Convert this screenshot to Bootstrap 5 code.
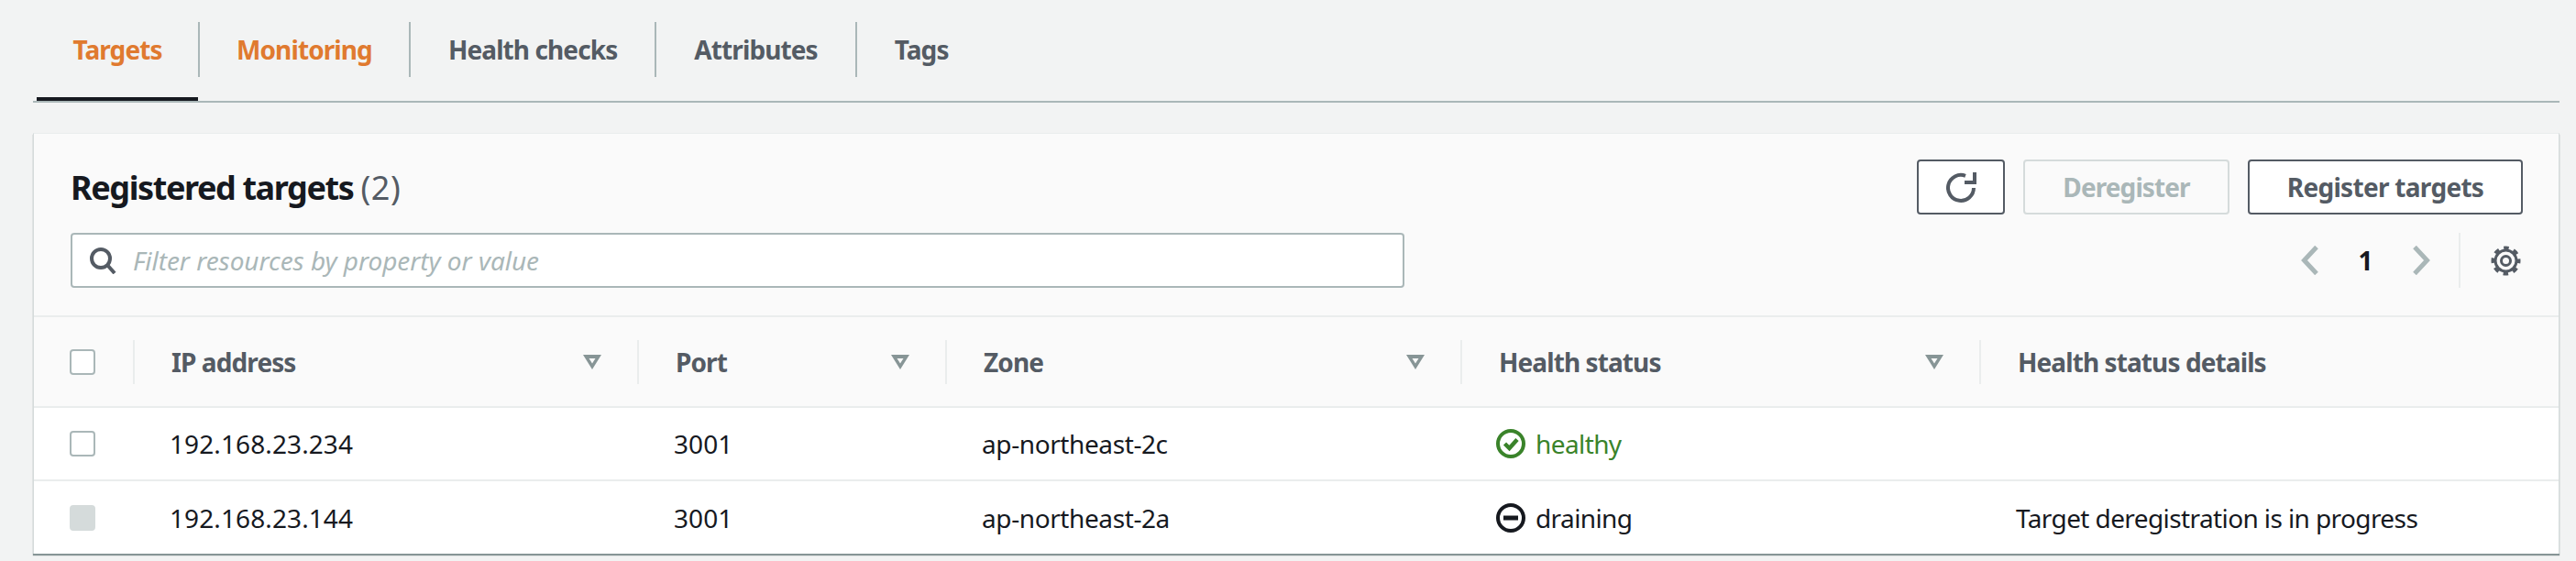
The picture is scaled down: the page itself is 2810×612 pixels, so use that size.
<!DOCTYPE html>
<html lang="en">
<head>
<meta charset="utf-8">
<title>Registered targets</title>
<link href="https://cdn.jsdelivr.net/npm/bootstrap@5.3.0/dist/css/bootstrap.min.css" rel="stylesheet">
<style>
:root { --ink:#16191f; --slate:#545b64; --rule:#eaeded; --steel:#aab7b8; --pale:#d5dbdb; }
html, body { height:100%; }
body { background:#f2f3f3; color:var(--ink); font-family:"Noto Sans","Open Sans",sans-serif; font-size:28px; line-height:40px; overflow:hidden; }
.tabstrip { margin:0 18px 0 36px; height:112px; border-bottom:2px solid var(--steel); padding:24px 0 0 4px; }
.tabitem { height:60px; padding:0 41px; font-size:28px; font-weight:700; line-height:60px; color:var(--slate); border-left:2px solid var(--steel); letter-spacing:-.9px; position:relative; }
.tabitem:first-child { border-left:0; padding:0; width:176px; text-align:center; }
.tabitem.tab-hot { padding:0 40px; }
.tabitem.tab-on, .tabitem.tab-hot { color:#e07a2f; }
.tabitem.tab-on::after { content:""; position:absolute; left:0; right:0; top:82px; height:4px; background:var(--ink); }
.panel { margin:33px 18px 0 36px; height:459px; background:#fff; border-top:1px solid var(--rule); border-left:1px solid #d5dbdb; border-right:1px solid #d5dbdb; box-shadow:0 2px 1px #879596; }
.panelhead { height:200px; background:#fafafa; border-bottom:2px solid var(--rule); padding:28px 39px 0 40px; }
.paneltitle { font-size:36px; line-height:52px; font-weight:700; letter-spacing:-1.4px; margin:5px 0 0; }
.paneltitle span { font-weight:400; color:var(--slate); letter-spacing:.6px; }
.awsbtn { height:60px; border:2px solid var(--slate); border-radius:4px; background:#fff; color:var(--slate); font-size:28px; font-weight:700; line-height:1; padding:0; letter-spacing:-.9px; }
.awsbtn:disabled { border-color:var(--pale); color:var(--steel); opacity:1; background:#fafafa; }
.btn-refresh { width:96px; }
.btn-dereg { width:225px; }
.btn-reg { width:300px; letter-spacing:-.7px; }
.filterbox { width:1455px; height:60px; margin-top:23px; border:2px solid var(--steel); border-radius:4px; background:#fff; padding-left:19px; }
.filterbox input { border:0; outline:0; background:transparent; flex:1; font-size:28px; font-style:italic; color:var(--ink); letter-spacing:-.05px; margin-left:18px; padding:0; }
.filterbox input::placeholder { color:var(--steel); opacity:1; }
.pager { margin-top:20px; height:60px; padding-right:2px; }
.pagenum { width:101px; text-align:center; font-weight:700; font-size:28px; }
.pagerule { width:2px; height:60px; background:var(--rule); margin:0 33px 0 31px; }
.targets { table-layout:fixed; width:100%; margin:0; border-collapse:collapse; }
.table.targets > thead > tr > th { height:98px; padding:0; background:#fafafa; color:var(--slate); font-weight:700; font-size:28px; letter-spacing:-.9px; vertical-align:middle; border-bottom:2px solid var(--rule); box-shadow:none; }
.table.targets > tbody > tr > td { height:80px; padding:0 0 0 40px; color:var(--ink); font-size:28px; letter-spacing:-.4px; vertical-align:middle; background:#fff; border-bottom:2px solid var(--rule); box-shadow:none; }
.table.targets > tbody > tr:last-child > td { border-bottom:0; }
.table.targets > tbody > tr > td.cell-tick { padding-left:39px; }
.table.targets > tbody > tr > td.ip-val { letter-spacing:.1px; }
.table.targets > tbody > tr > td.cell-tight { letter-spacing:-.6px; }
.table.targets > tbody > tr > td.cell-good { color:#3a832a; }
.headcell { height:48px; padding:0 39px 0 40px; border-left:2px solid var(--rule); }
.headcell.no-rule { border-left:0; padding:0 0 0 39px; }
.tickbox { display:block; width:28px; height:28px; border:2px solid var(--steel); border-radius:4px; background:#fff; }
.tickbox.tick-off { background:var(--pale); border-color:var(--pale); }
.statusline { gap:11px; margin-left:-1px; }
</style>
</head>
<body>
<nav class="tabstrip d-flex">
  <div class="tabitem tab-on">Targets</div>
  <div class="tabitem tab-hot">Monitoring</div>
  <div class="tabitem">Health checks</div>
  <div class="tabitem">Attributes</div>
  <div class="tabitem">Tags</div>
</nav>
<section class="panel">
  <div class="panelhead d-flex justify-content-between">
    <div>
      <h2 class="paneltitle">Registered targets <span>(2)</span></h2>
      <div class="filterbox d-flex align-items-center">
        <svg width="29" height="29" viewBox="0 0 29 29" fill="none" stroke="#545b64" stroke-width="4"><circle cx="12" cy="12" r="10"/><path d="M19 19l8 9"/></svg>
        <input type="text" placeholder="Filter resources by property or value" aria-label="Filter">
      </div>
    </div>
    <div class="d-flex flex-column align-items-end">
      <div class="d-flex" style="gap:20px">
        <button class="awsbtn btn-refresh" aria-label="Refresh"><svg width="33" height="33" viewBox="0 0 33 33" fill="none"><path d="M21 3.800A14 14 0 1 0 30 17" stroke="#545b64" stroke-width="4"/><path d="M33 0v13H20V9h9V0z" fill="#545b64"/></svg></button>
        <button class="awsbtn btn-dereg" disabled>Deregister</button>
        <button class="awsbtn btn-reg">Register targets</button>
      </div>
      <div class="pager d-flex align-items-center">
        <svg width="20" height="32" viewBox="0 0 20 32" fill="none" stroke="#aab7b8" stroke-width="5"><path d="M17 1.500L3.500 16 17 30.500"/></svg>
        <span class="pagenum">1</span>
        <svg width="20" height="32" viewBox="0 0 20 32" fill="none" stroke="#aab7b8" stroke-width="5"><path d="M3 1.500L16.500 16 3 30.500"/></svg>
        <span class="pagerule"></span>
        <svg width="33" height="33" viewBox="0 0 33 33" fill="none" stroke="#545b64"><circle cx="16.500" cy="16.500" r="11.500" stroke-width="3"/><circle cx="16.500" cy="16.500" r="14" stroke-width="4" stroke-dasharray="5.500 5.500" stroke-dashoffset="2.750"/><circle cx="16.500" cy="16.500" r="5" stroke-width="3"/></svg>
      </div>
    </div>
  </div>
  <table class="table targets">
    <colgroup><col style="width:108px"><col style="width:550px"><col style="width:336px"><col style="width:562px"><col style="width:566px"><col></colgroup>
    <thead>
      <tr>
        <th><div class="headcell no-rule d-flex align-items-center"><span class="tickbox"></span></div></th>
        <th><div class="headcell d-flex align-items-center justify-content-between">IP address<svg width="20" height="16" viewBox="0 0 20 16"><path fill="#879596" fill-rule="evenodd" d="M0 0h20L10 16zM6.500 4h7L10 9.500z"/></svg></div></th>
        <th><div class="headcell d-flex align-items-center justify-content-between">Port<svg width="20" height="16" viewBox="0 0 20 16"><path fill="#879596" fill-rule="evenodd" d="M0 0h20L10 16zM6.500 4h7L10 9.500z"/></svg></div></th>
        <th><div class="headcell d-flex align-items-center justify-content-between">Zone<svg width="20" height="16" viewBox="0 0 20 16"><path fill="#879596" fill-rule="evenodd" d="M0 0h20L10 16zM6.500 4h7L10 9.500z"/></svg></div></th>
        <th><div class="headcell d-flex align-items-center justify-content-between">Health status<svg width="20" height="16" viewBox="0 0 20 16"><path fill="#879596" fill-rule="evenodd" d="M0 0h20L10 16zM6.500 4h7L10 9.500z"/></svg></div></th>
        <th><div class="headcell d-flex align-items-center">Health status details</div></th>
      </tr>
    </thead>
    <tbody>
      <tr>
        <td class="cell-tick"><span class="tickbox"></span></td>
        <td class="ip-val">192.168.23.234</td>
        <td class="ip-val">3001</td>
        <td>ap-northeast-2c</td>
        <td class="cell-tight cell-good"><div class="statusline d-flex align-items-center"><svg width="32" height="32" viewBox="0 0 32 32" fill="none" stroke="#3a832a" stroke-width="4"><circle cx="16" cy="16" r="14"/><path stroke-width="4.500" d="M9.500 16l5 5 8.500-9.500"/></svg>healthy</div></td>
        <td></td>
      </tr>
      <tr>
        <td class="cell-tick"><span class="tickbox tick-off"></span></td>
        <td class="ip-val">192.168.23.144</td>
        <td class="ip-val">3001</td>
        <td>ap-northeast-2a</td>
        <td class="cell-tight"><div class="statusline d-flex align-items-center"><svg width="32" height="32" viewBox="0 0 32 32" fill="none" stroke="#16191f" stroke-width="4"><circle cx="16" cy="16" r="14"/><path stroke-width="5" d="M8 16h16"/></svg>draining</div></td>
        <td class="cell-tight">Target deregistration is in progress</td>
      </tr>
    </tbody>
  </table>
</section>
<script src="https://cdn.jsdelivr.net/npm/bootstrap@5.3.0/dist/js/bootstrap.bundle.min.js"></script>
</body>
</html>
